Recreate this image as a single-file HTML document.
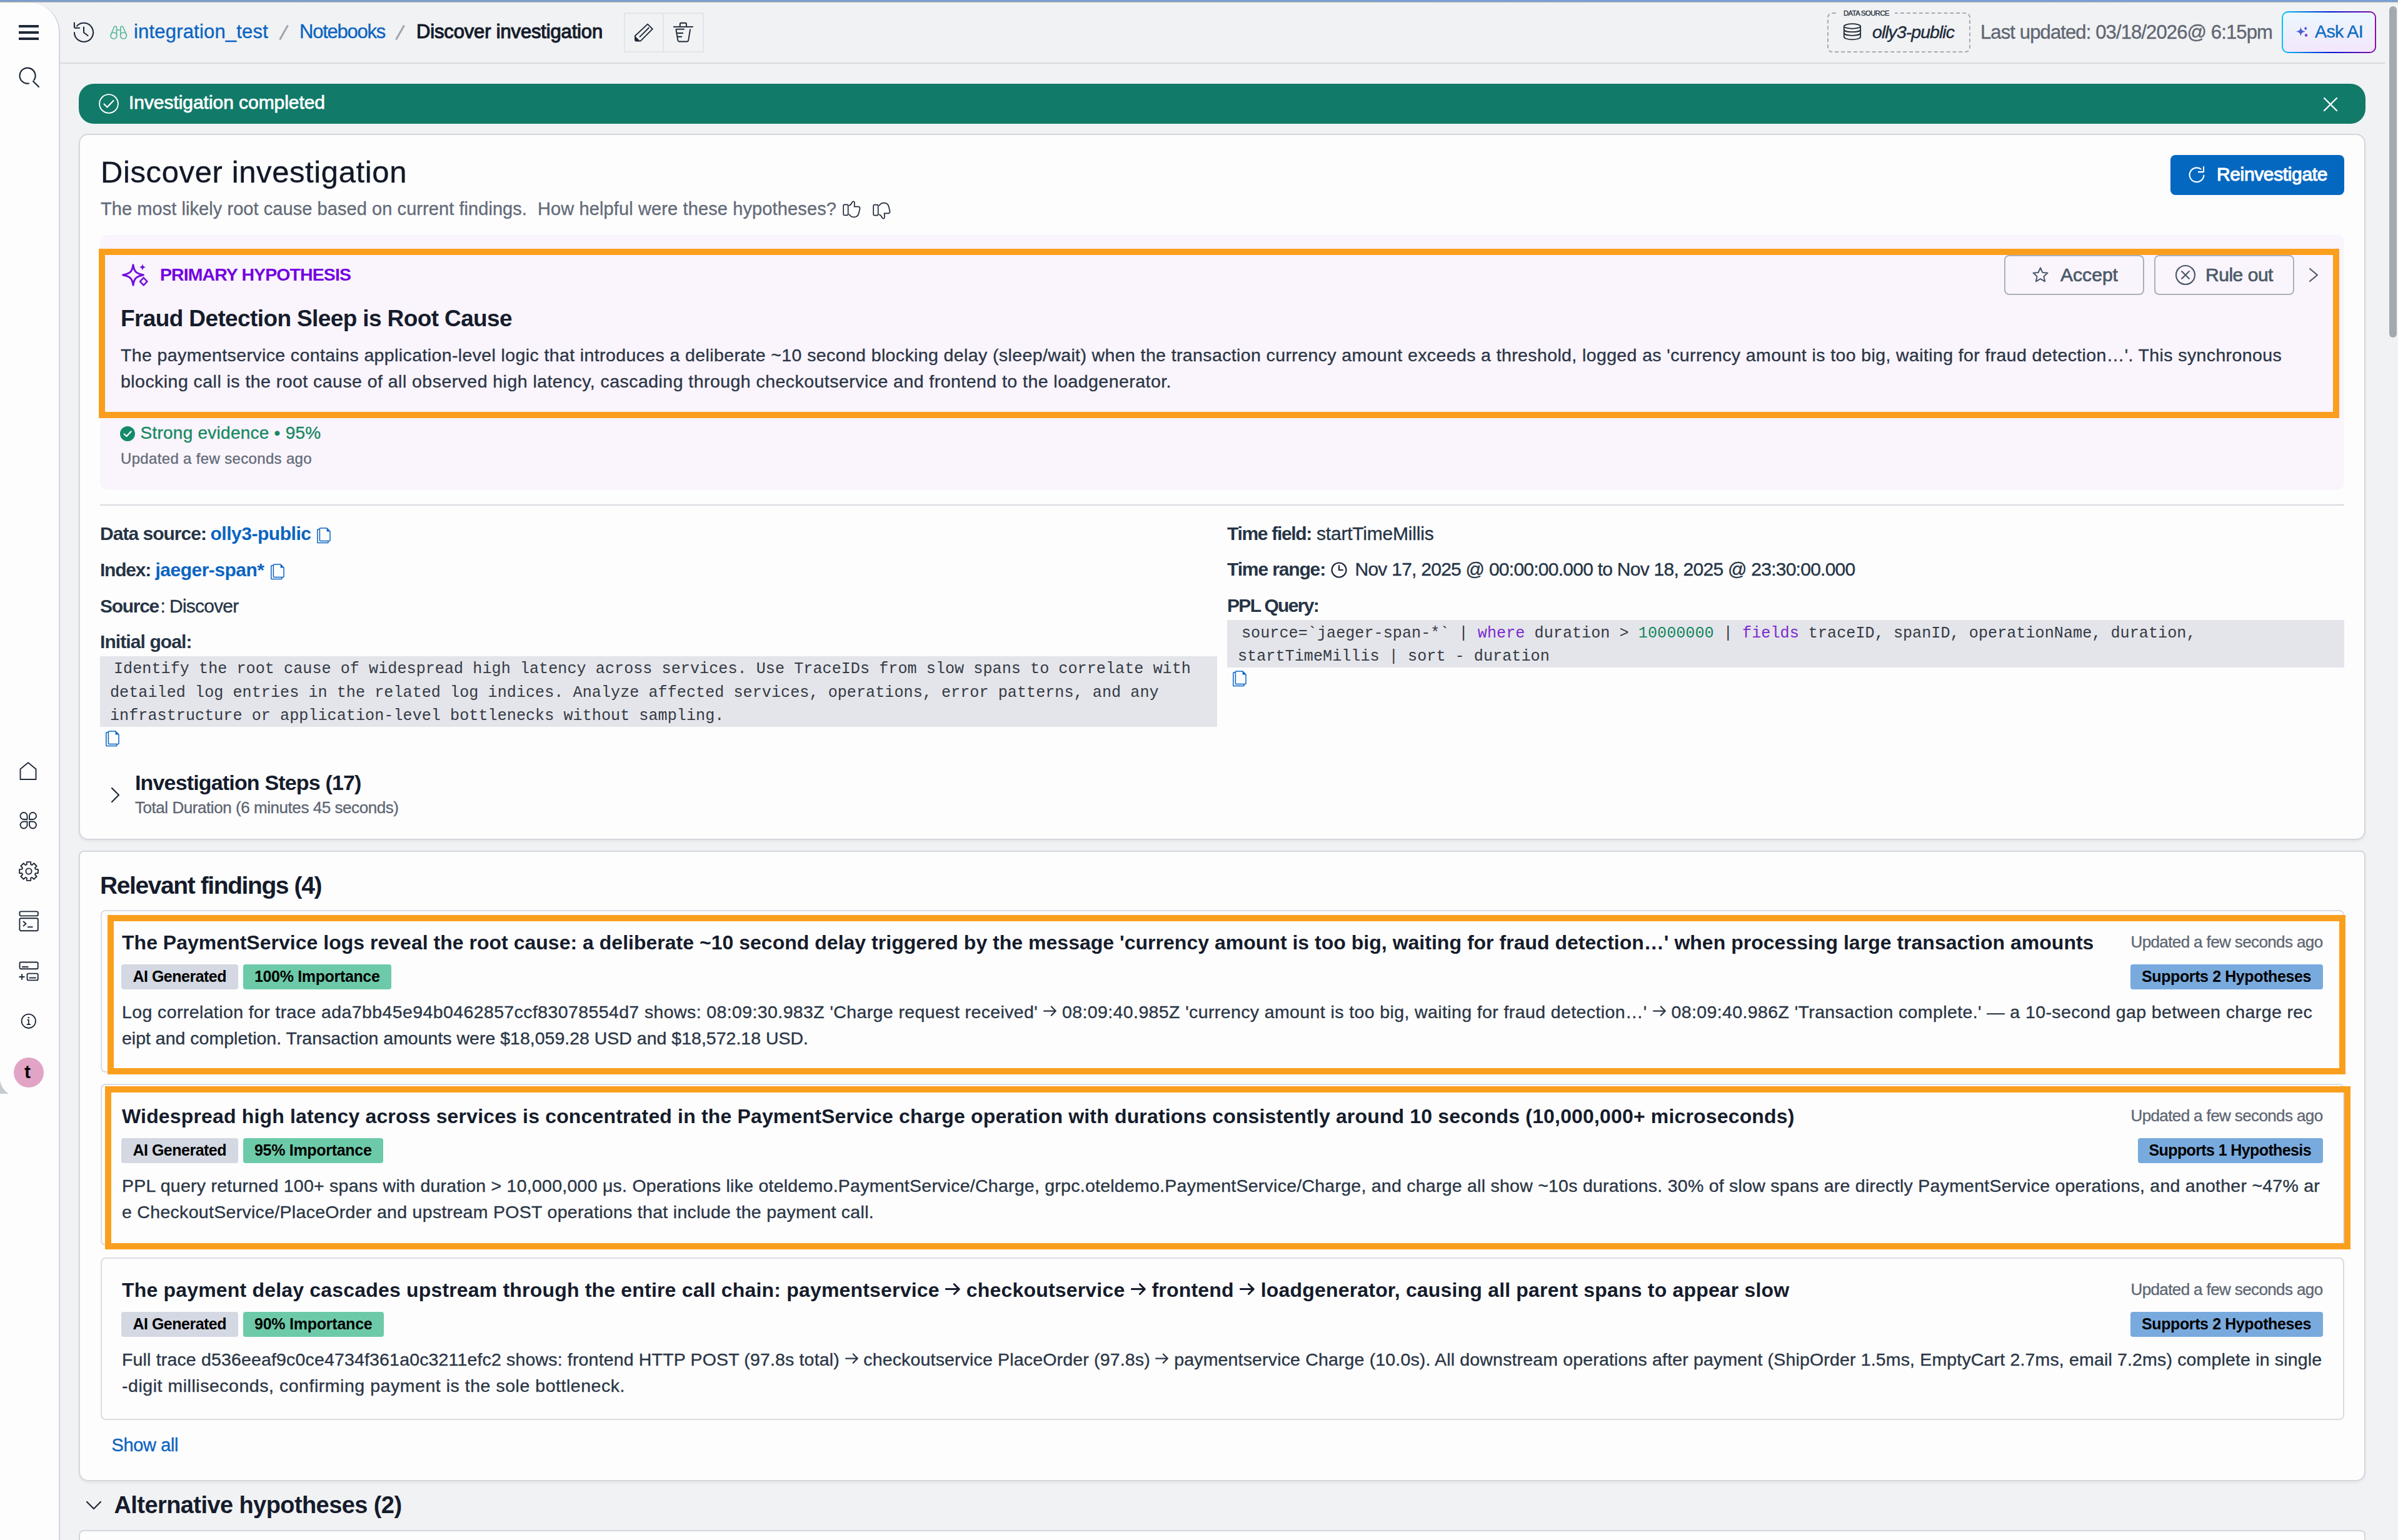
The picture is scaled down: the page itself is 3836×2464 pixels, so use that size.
<!DOCTYPE html><html><head><meta charset="utf-8"><style>html,body{margin:0;padding:0;}body{width:3836px;height:2464px;overflow:hidden;position:relative;background:#f1f2f4;font-family:"Liberation Sans",sans-serif;}.t{position:absolute;white-space:pre;line-height:1;}#root{position:relative;width:3836px;height:2464px;overflow:hidden;}</style></head><body><div id="root">
<div style="position:absolute;left:0px;top:0px;width:3836px;height:3px;box-sizing:border-box;background:linear-gradient(90deg,#7f9dcc,#7a9fd6);"></div>
<div style="position:absolute;left:0px;top:3px;width:3836px;height:1px;box-sizing:border-box;background:#b7c2a8;"></div>
<div style="position:absolute;left:0;top:4px;width:96px;height:2460px;box-sizing:border-box;background:#fdfdfe;border-right:2px solid #d3d6dc;border-top-right-radius:48px;"></div>
<svg style="position:absolute;left:0px;top:1725px;" width="16" height="26" viewBox="0 0 16 26" fill="none"><path d="M0 4 C1.5 12 6 20 14 25 H0 Z" fill="#c6cbd2"/></svg>
<div style="position:absolute;left:95px;top:100px;width:3720px;height:2px;box-sizing:border-box;background:#d6d9de;"></div>
<div style="position:absolute;left:3822px;top:10px;width:12px;height:530px;box-sizing:border-box;background:#a3a9b1;border-radius:6px;"></div>
<svg style="position:absolute;left:30px;top:40px;" width="32" height="24" viewBox="0 0 32 24" fill="none"><rect x="0" y="0" width="32" height="4" fill="#1f2937"/><rect x="0" y="10" width="32" height="4" fill="#1f2937"/><rect x="0" y="20" width="32" height="4" fill="#1f2937"/></svg>
<svg style="position:absolute;left:28px;top:106px;" width="36" height="36" viewBox="0 0 36 36" fill="none"><path d="M18 27.5 A12.5 12.5 0 1 1 26.5 22" stroke="#1f2937" stroke-width="2.2" stroke-linecap="round"/><path d="M25 24 L34 33" stroke="#1f2937" stroke-width="2.2" stroke-linecap="round"/></svg>
<svg style="position:absolute;left:30px;top:1218px;" width="32" height="32" viewBox="0 0 32 32" fill="none"><path d="M2.5 29 V12.5 L15 2.2 L27.5 12.5 V29 Z" stroke="#1f2937" stroke-width="1.9" stroke-linejoin="round"/></svg>
<svg style="position:absolute;left:30px;top:1298px;" width="32" height="32" viewBox="0 0 32 32" fill="none"><g stroke="#1f2937" stroke-width="1.9" stroke-linejoin="round"><path d="M13.5 13 H8 A5.5 5.5 0 1 1 13.5 7.5 Z"/><path d="M17 13 H22.5 A5.5 5.5 0 1 0 17 7.5 Z"/><path d="M13.5 16.5 H8 A5.5 5.5 0 1 0 13.5 22 Z"/><path d="M17 16.5 H22.5 A5.5 5.5 0 1 1 17 22 Z"/></g></svg>
<svg style="position:absolute;left:30px;top:1378px;" width="32" height="32" viewBox="0 0 32 32" fill="none"><g stroke="#1f2937" stroke-width="1.9" stroke-linejoin="round"><path d="M12.73 5.29 L12.84 1.13 L19.16 1.13 L19.27 5.29 L21.26 6.11 L24.28 3.25 L28.75 7.72 L25.89 10.74 L26.71 12.73 L30.87 12.84 L30.87 19.16 L26.71 19.27 L25.89 21.26 L28.75 24.28 L24.28 28.75 L21.26 25.89 L19.27 26.71 L19.16 30.87 L12.84 30.87 L12.73 26.71 L10.74 25.89 L7.72 28.75 L3.25 24.28 L6.11 21.26 L5.29 19.27 L1.13 19.16 L1.13 12.84 L5.29 12.73 L6.11 10.74 L3.25 7.72 L7.72 3.25 L10.74 6.11 Z"/><circle cx="16" cy="16" r="4.6"/></g></svg>
<svg style="position:absolute;left:30px;top:1456px;" width="34" height="36" viewBox="0 0 34 36" fill="none"><g stroke="#1f2937" stroke-width="1.9"><rect x="1.4" y="2.4" width="29.4" height="7" rx="2.2"/><rect x="1.4" y="13.2" width="29.4" height="20" rx="2.2"/><path d="M7.5 18.6 L11.6 22 L7.5 25.4" stroke-linecap="round" stroke-linejoin="round"/><path d="M14 27.2 H22.5"/></g></svg>
<svg style="position:absolute;left:30px;top:1536px;" width="34" height="36" viewBox="0 0 34 36" fill="none"><g stroke="#1f2937" stroke-width="1.9"><rect x="1.5" y="3.5" width="29.2" height="10.7" rx="2"/><path d="M5 11 H15.5"/><rect x="13.5" y="21.6" width="17.2" height="10.8" rx="2"/><path d="M16.5 28.5 H27.7"/><path d="M0.5 27 H9.5 M5 22.2 V31.8"/></g></svg>
<svg style="position:absolute;left:30px;top:1620px;" width="32" height="30" viewBox="0 0 32 30" fill="none"><g stroke="#1f2937" stroke-width="1.8"><circle cx="15.8" cy="13.8" r="11.2"/><path d="M13.6 11.8 H15.8 V19.2 M12.8 19.2 H19"/></g><circle cx="15.8" cy="8.3" r="1.3" fill="#1f2937"/></svg>
<div style="position:absolute;left:22px;top:1692px;width:48px;height:48px;box-sizing:border-box;background:#e2a4c5;border-radius:50%;"></div>
<svg style="position:absolute;left:116px;top:33px;" width="36" height="36" viewBox="0 0 36 36" fill="none"><g stroke="#1f2937" stroke-width="2.1" stroke-linecap="round" stroke-linejoin="round"><path d="M2.9 19 A15.1 15.1 0 1 0 6.9 8.6"/><path d="M2.9 3.6 V9.4 Q2.9 11.8 5.2 11.8 H11"/><path d="M18 10.5 V19 L24.5 24"/></g></svg>
<svg style="position:absolute;left:175px;top:39px;" width="30" height="26" viewBox="0 0 30 26" fill="none"><g stroke="#5cb89a" stroke-width="1.7"><circle cx="7" cy="18" r="5"/><circle cx="22.5" cy="18" r="5"/><path d="M2.2 17 L7.5 4.5 C8.5 2.5 11 2.5 11.5 4.5 V17.5 M27.3 17 L22 4.5 C21 2.5 18.5 2.5 18 4.5 V17.5 M11.5 9 H18"/></g></svg>
<svg style="position:absolute;left:440px;top:36px;" width="28" height="32" viewBox="0 0 28 32" fill="none"><path d="M7.5 27.5 L20.5 4.5" stroke="#a0a5ad" stroke-width="3" stroke-linecap="butt"/></svg>
<svg style="position:absolute;left:626px;top:36px;" width="28" height="32" viewBox="0 0 28 32" fill="none"><path d="M7.5 27.5 L20.5 4.5" stroke="#a0a5ad" stroke-width="3" stroke-linecap="butt"/></svg>
<div style="position:absolute;left:998px;top:20px;width:128px;height:64px;box-sizing:border-box;border:2px solid #e2e5e9;"></div>
<div style="position:absolute;left:1060px;top:20px;width:2px;height:64px;box-sizing:border-box;background:#e2e5e9;"></div>
<svg style="position:absolute;left:1010px;top:35px;" width="36" height="36" viewBox="0 0 36 36" fill="none"><g stroke="#1f2937" stroke-width="1.9" stroke-linejoin="round"><path d="M26 3.6 L33.8 11.4 L14.6 30.6 H8 Q6 30.6 6 28.6 V22.2 Z"/><path d="M13 24.4 L28.4 9"/></g><path d="M6 22.8 L14 30.6 H8 Q6 30.6 6 28.6 Z" fill="#1f2937"/></svg>
<svg style="position:absolute;left:1070px;top:30px;" width="44" height="44" viewBox="0 0 44 44" fill="none"><g stroke="#1f2937" stroke-width="1.9" stroke-linecap="butt" stroke-linejoin="round"><path d="M7 12.9 H38.8"/><path d="M17.8 12.9 V8.5 Q17.8 6.8 19.5 6.8 H26.3 Q28 6.8 28 8.5 V12.9"/><path d="M11.3 16.7 H24.9"/><path d="M11.3 16.4 L14.3 34.4 Q14.8 36.5 17 36.5 H28.6 Q30.8 36.5 31.2 34.4 L34.2 16.4"/><path d="M12.4 23 H22.9 M13.4 28.8 H21"/></g></svg>
<div style="position:absolute;left:2923px;top:20px;width:229px;height:64px;box-sizing:border-box;border:2px dashed #a6acb4;border-radius:8px;"></div>
<div style="position:absolute;left:2937px;top:12px;width:94px;height:16px;box-sizing:border-box;background:#f1f2f4;"></div>
<svg style="position:absolute;left:2946px;top:36px;" width="34" height="30" viewBox="0 0 34 30" fill="none"><g stroke="#1f2937" stroke-width="1.8"><ellipse cx="17" cy="6" rx="13.2" ry="3.8"/><path d="M3.8 6 V23 C3.8 25.3 9.5 27.3 17 27.3 C24.5 27.3 30.2 25.3 30.2 23 V6"/><path d="M3.8 11.2 C3.8 13.5 9.5 15.2 17 15.2 C24.5 15.2 30.2 13.5 30.2 11.2 M3.8 16.8 C3.8 19.1 9.5 20.8 17 20.8 C24.5 20.8 30.2 19.1 30.2 16.8"/></g></svg>
<div style="position:absolute;left:3650px;top:18px;width:151px;height:67px;box-sizing:border-box;border-radius:10px;padding:2px;background:linear-gradient(90deg,#00c6f7,#0018d0 52%,#8a0ea6);"><div style="width:100%;height:100%;border-radius:8px;background:linear-gradient(180deg,#ebf7fd,#f3e6fb);"></div></div>
<svg style="position:absolute;left:3670px;top:40px;" width="24" height="22" viewBox="0 0 24 22" fill="none"><defs><linearGradient id="ag" x1="0" y1="0" x2="1" y2="1"><stop offset="0" stop-color="#3f7ee6"/><stop offset="1" stop-color="#5a3fd0"/></linearGradient></defs><path d="M10.4 2.5 C11 7.5 12.5 9.5 18 10.4 C12.5 11.3 11 13.3 10.4 18.3 C9.8 13.3 8.3 11.3 2.8 10.4 C8.3 9.5 9.8 7.5 10.4 2.5 Z" fill="url(#ag)"/><path d="M18.2 2.8 L20.6 5.5 L18.2 8.2 L15.8 5.5 Z" fill="#4b5ad8"/><path d="M19 13.6 L21.6 16.4 L19 19.2 L16.4 16.4 Z" fill="#6a3fc8"/></svg>
<div style="position:absolute;left:126px;top:134px;width:3658px;height:64px;box-sizing:border-box;background:#117a69;border-radius:24px;"></div>
<svg style="position:absolute;left:156px;top:148px;" width="36" height="36" viewBox="0 0 36 36" fill="none"><circle cx="18" cy="18" r="14.9" stroke="#fff" stroke-width="1.9"/><path d="M10.5 18.5 L15.5 23.5 L25.5 13" stroke="#fff" stroke-width="2.2" stroke-linecap="round" stroke-linejoin="round"/></svg>
<svg style="position:absolute;left:3716px;top:155px;" width="24" height="24" viewBox="0 0 24 24" fill="none"><path d="M2 2 L22 22 M22 2 L2 22" stroke="#fff" stroke-width="2.4" stroke-linecap="round"/></svg>
<div style="position:absolute;left:126px;top:214px;width:3658px;height:1130px;box-sizing:border-box;background:#fdfdfe;border:2px solid #d3d7dc;border-radius:15px;box-shadow:0 3px 4px rgba(0,0,0,0.05);"></div>
<svg style="position:absolute;left:1346px;top:320px;" width="32" height="30" viewBox="0 0 32 30" fill="none"><g stroke="#1f2937" stroke-width="1.7" stroke-linejoin="round" stroke-linecap="round"><rect x="3.2" y="7.3" width="7.5" height="17.1" rx="1.6"/><path d="M12.4 8.6 C14.2 8.4 14.8 7.8 15.8 6 L17.6 3 C18.8 1.8 21.2 2.4 21 5 L20.6 10.6 H27.2 C29.2 10.8 29.9 12.6 29.4 14.4 L27.6 21.8 C27.2 23.6 26 25.6 23.4 26.8 C21 27.6 18 27.4 16 26.4 C14.5 25.6 13.5 24.4 12.4 23.2"/></g></svg>
<svg style="position:absolute;left:1394px;top:321.7px;transform:scaleY(-1);" width="32" height="30" viewBox="0 0 32 30" fill="none"><g stroke="#1f2937" stroke-width="1.7" stroke-linejoin="round" stroke-linecap="round"><rect x="3.2" y="7.3" width="7.5" height="17.1" rx="1.6"/><path d="M12.4 8.6 C14.2 8.4 14.8 7.8 15.8 6 L17.6 3 C18.8 1.8 21.2 2.4 21 5 L20.6 10.6 H27.2 C29.2 10.8 29.9 12.6 29.4 14.4 L27.6 21.8 C27.2 23.6 26 25.6 23.4 26.8 C21 27.6 18 27.4 16 26.4 C14.5 25.6 13.5 24.4 12.4 23.2"/></g></svg>
<div style="position:absolute;left:3472px;top:248px;width:278px;height:64px;box-sizing:border-box;background:#0468c0;border-radius:8px;"></div>
<svg style="position:absolute;left:3498px;top:262px;" width="32" height="34" viewBox="0 0 32 34" fill="none"><g stroke="#fff" stroke-width="2.1" stroke-linecap="butt" stroke-linejoin="round"><path d="M27.4 17.7 A11.4 11.4 0 1 1 23.3 9"/><path d="M27 4.2 V13.1 H18"/></g></svg>
<div style="position:absolute;left:160px;top:376px;width:3590px;height:408px;box-sizing:border-box;background:#faf4fd;border-radius:12px;"></div>
<div style="position:absolute;left:158px;top:398px;width:3584px;height:271px;box-sizing:border-box;border:10px solid #fa9f1d;"></div>
<svg style="position:absolute;left:194px;top:420px;" width="44" height="40" viewBox="0 0 44 40" fill="none"><path d="M19 3.8 C20.5 14 23 17.5 35.4 20 C23 22.5 20.5 26 19 36.2 C17.5 26 15 22.5 2.6 20 C15 17.5 17.5 14 19 3.8 Z" stroke="#7211e0" stroke-width="3" stroke-linejoin="round"/><path d="M34 1.8 C34.6 5.6 35.6 6.8 39.4 7.5 C35.6 8.2 34.6 9.4 34 13.2 C33.4 9.4 32.4 8.2 28.6 7.5 C32.4 6.8 33.4 5.6 34 1.8 Z" fill="#7211e0"/><path d="M35.7 24.4 L41.4 30.4 L35.7 36.4 L30 30.4 Z" stroke="#7211e0" stroke-width="2.6" stroke-linejoin="round"/></svg>
<div style="position:absolute;left:3206px;top:408px;width:224px;height:64px;box-sizing:border-box;border:2px solid #a9b1ba;border-radius:8px;"></div>
<svg style="position:absolute;left:3250px;top:426px;" width="28" height="28" viewBox="0 0 28 28" fill="none"><path d="M14 2.5 L17.4 10 L25.5 10.8 L19.4 16.2 L21.2 24.3 L14 20.1 L6.8 24.3 L8.6 16.2 L2.5 10.8 L10.6 10 Z" stroke="#4a5a68" stroke-width="2" stroke-linejoin="round"/></svg>
<div style="position:absolute;left:3446px;top:408px;width:224px;height:64px;box-sizing:border-box;border:2px solid #a9b1ba;border-radius:8px;"></div>
<svg style="position:absolute;left:3478px;top:422px;" width="36" height="36" viewBox="0 0 36 36" fill="none"><circle cx="18" cy="18" r="15" stroke="#4a5a68" stroke-width="2.2"/><path d="M11.5 11.5 L24.5 24.5 M24.5 11.5 L11.5 24.5" stroke="#4a5a68" stroke-width="2.2"/></svg>
<svg style="position:absolute;left:3692px;top:428px;" width="20" height="24" viewBox="0 0 20 24" fill="none"><path d="M3 2 L15 12 L3 22" stroke="#4a5a68" stroke-width="2.2" stroke-linecap="round" stroke-linejoin="round"/></svg>
<svg style="position:absolute;left:192px;top:682px;" width="24" height="24" viewBox="0 0 24 24" fill="none"><circle cx="12" cy="12" r="12" fill="#148a68"/><path d="M6.5 12.5 L10.5 16 L17.5 8.5" stroke="#fff" stroke-width="2.2" stroke-linecap="round" stroke-linejoin="round"/></svg>
<div style="position:absolute;left:160px;top:807px;width:3590px;height:2px;box-sizing:border-box;background:#d6d9de;"></div>
<svg style="position:absolute;left:505px;top:843px;" width="26" height="28" viewBox="0 0 26 28" fill="none"><g stroke="#0b64c1" stroke-width="1.5" stroke-linejoin="round"><path d="M7.2 2.1 H17.8 L23 7.3 V21.6 Q23 22.4 22.2 22.4 H7.2 Q6.4 22.4 6.4 21.6 V2.9 Q6.4 2.1 7.2 2.1 Z"/><path d="M6.4 3.6 L3.4 4.1 Q2.8 4.2 2.8 4.8 V24.8 Q2.8 25.6 3.6 25.6 H19.2 Q20 25.6 20 24.8 V22.4"/></g><path d="M17.6 2.1 L23 7.5 H17.6 Z" fill="#0b64c1"/></svg>
<svg style="position:absolute;left:431px;top:901px;" width="26" height="28" viewBox="0 0 26 28" fill="none"><g stroke="#0b64c1" stroke-width="1.5" stroke-linejoin="round"><path d="M7.2 2.1 H17.8 L23 7.3 V21.6 Q23 22.4 22.2 22.4 H7.2 Q6.4 22.4 6.4 21.6 V2.9 Q6.4 2.1 7.2 2.1 Z"/><path d="M6.4 3.6 L3.4 4.1 Q2.8 4.2 2.8 4.8 V24.8 Q2.8 25.6 3.6 25.6 H19.2 Q20 25.6 20 24.8 V22.4"/></g><path d="M17.6 2.1 L23 7.5 H17.6 Z" fill="#0b64c1"/></svg>
<div style="position:absolute;left:160px;top:1050px;width:1787px;height:113px;box-sizing:border-box;background:#e4e5ea;"></div>
<svg style="position:absolute;left:167px;top:1168px;" width="26" height="28" viewBox="0 0 26 28" fill="none"><g stroke="#0b64c1" stroke-width="1.5" stroke-linejoin="round"><path d="M7.2 2.1 H17.8 L23 7.3 V21.6 Q23 22.4 22.2 22.4 H7.2 Q6.4 22.4 6.4 21.6 V2.9 Q6.4 2.1 7.2 2.1 Z"/><path d="M6.4 3.6 L3.4 4.1 Q2.8 4.2 2.8 4.8 V24.8 Q2.8 25.6 3.6 25.6 H19.2 Q20 25.6 20 24.8 V22.4"/></g><path d="M17.6 2.1 L23 7.5 H17.6 Z" fill="#0b64c1"/></svg>
<svg style="position:absolute;left:2128px;top:898px;" width="28" height="28" viewBox="0 0 28 28" fill="none"><g stroke="#1f2937" stroke-width="2.2" stroke-linecap="round"><circle cx="14" cy="14" r="11.5"/><path d="M14 7 V14 H20"/></g></svg>
<div style="position:absolute;left:1963px;top:992px;width:1787px;height:76px;box-sizing:border-box;background:#e4e5ea;"></div>
<svg style="position:absolute;left:1970px;top:1072px;" width="26" height="28" viewBox="0 0 26 28" fill="none"><g stroke="#0b64c1" stroke-width="1.5" stroke-linejoin="round"><path d="M7.2 2.1 H17.8 L23 7.3 V21.6 Q23 22.4 22.2 22.4 H7.2 Q6.4 22.4 6.4 21.6 V2.9 Q6.4 2.1 7.2 2.1 Z"/><path d="M6.4 3.6 L3.4 4.1 Q2.8 4.2 2.8 4.8 V24.8 Q2.8 25.6 3.6 25.6 H19.2 Q20 25.6 20 24.8 V22.4"/></g><path d="M17.6 2.1 L23 7.5 H17.6 Z" fill="#0b64c1"/></svg>
<svg style="position:absolute;left:175px;top:1258px;" width="20" height="28" viewBox="0 0 20 28" fill="none"><path d="M4 3 L15 14 L4 25" stroke="#1f2937" stroke-width="2.2" stroke-linecap="round" stroke-linejoin="round"/></svg>
<div style="position:absolute;left:126px;top:1361px;width:3658px;height:1009px;box-sizing:border-box;background:#fdfdfe;border:2px solid #d3d7dc;border-radius:8px 8px 15px 15px;box-shadow:0 3px 4px rgba(0,0,0,0.05);"></div>
<div style="position:absolute;left:161px;top:1456px;width:3589px;height:260px;box-sizing:border-box;border:2px solid #d9dce1;border-radius:8px;"></div>
<div style="position:absolute;left:172px;top:1464px;width:3580px;height:255px;box-sizing:border-box;border:10px solid #fa9f1d;"></div>
<div style="position:absolute;left:194px;top:1543px;width:187px;height:40px;box-sizing:border-box;background:#d3d8e2;border-radius:4px;"></div>
<div style="position:absolute;left:389px;top:1543px;width:237px;height:40px;box-sizing:border-box;background:#6dcaa9;border-radius:4px;"></div>
<div style="position:absolute;left:3408px;top:1543px;width:308px;height:40px;box-sizing:border-box;background:#79aade;border-radius:4px;"></div>
<div style="position:absolute;left:161px;top:1734px;width:3589px;height:259px;box-sizing:border-box;border:2px solid #d9dce1;border-radius:8px;"></div>
<div style="position:absolute;left:168px;top:1738px;width:3592px;height:261px;box-sizing:border-box;border:10px solid #fa9f1d;"></div>
<div style="position:absolute;left:194px;top:1821px;width:187px;height:40px;box-sizing:border-box;background:#d3d8e2;border-radius:4px;"></div>
<div style="position:absolute;left:389px;top:1821px;width:224px;height:40px;box-sizing:border-box;background:#6dcaa9;border-radius:4px;"></div>
<div style="position:absolute;left:3420px;top:1821px;width:296px;height:40px;box-sizing:border-box;background:#79aade;border-radius:4px;"></div>
<div style="position:absolute;left:161px;top:2012px;width:3589px;height:260px;box-sizing:border-box;border:2px solid #d9dce1;border-radius:8px;"></div>
<div style="position:absolute;left:194px;top:2099px;width:187px;height:40px;box-sizing:border-box;background:#d3d8e2;border-radius:4px;"></div>
<div style="position:absolute;left:389px;top:2099px;width:225px;height:40px;box-sizing:border-box;background:#6dcaa9;border-radius:4px;"></div>
<div style="position:absolute;left:3408px;top:2099px;width:308px;height:40px;box-sizing:border-box;background:#79aade;border-radius:4px;"></div>
<svg style="position:absolute;left:136px;top:2398px;" width="28" height="22" viewBox="0 0 28 22" fill="none"><path d="M3 5 L14 16 L25 5" stroke="#1f2937" stroke-width="2.2" stroke-linecap="round" stroke-linejoin="round"/></svg>
<div style="position:absolute;left:126px;top:2448px;width:3658px;height:32px;box-sizing:border-box;background:#fdfdfe;border:2px solid #d3d7dc;border-radius:8px;"></div>
<div class="t" style="left:39px;top:1699.50px;font-family:'Liberation Sans', sans-serif;font-size:30px;font-weight:700;color:#000000;">t</div>
<div class="t" style="left:214px;top:34.85px;font-family:'Liberation Sans', sans-serif;font-size:31px;font-weight:400;color:#0b64c1;letter-spacing:0.188px;-webkit-text-stroke:0.35px currentColor;">integration_test</div>
<div class="t" style="left:479px;top:34.85px;font-family:'Liberation Sans', sans-serif;font-size:31px;font-weight:400;color:#0b64c1;letter-spacing:-1.247px;-webkit-text-stroke:0.35px currentColor;">Notebooks</div>
<div class="t" style="left:666px;top:34.85px;font-family:'Liberation Sans', sans-serif;font-size:31px;font-weight:400;color:#151c2b;letter-spacing:-0.161px;-webkit-text-stroke:1.1px #151c2b;">Discover investigation</div>
<div class="t" style="left:2949px;top:15.59px;font-family:'Liberation Sans', sans-serif;font-size:11.3px;font-weight:400;color:#2b3440;letter-spacing:-0.574px;-webkit-text-stroke:0.35px currentColor;">DATA SOURCE</div>
<div class="t" style="left:2995px;top:36.78px;font-family:'Liberation Sans', sans-serif;font-size:28.5px;font-weight:400;color:#1d2a3a;letter-spacing:-0.965px;-webkit-text-stroke:0.35px currentColor;font-style:italic;">olly3-public</div>
<div class="t" style="left:3168px;top:35.65px;font-family:'Liberation Sans', sans-serif;font-size:31px;font-weight:400;color:#5f6672;letter-spacing:-0.879px;-webkit-text-stroke:0.35px currentColor;">Last updated: 03/18/2026@ 6:15pm</div>
<div class="t" style="left:3703px;top:36.48px;font-family:'Liberation Sans', sans-serif;font-size:28.5px;font-weight:400;color:#0a6bbf;letter-spacing:-0.633px;-webkit-text-stroke:0.35px currentColor;">Ask AI</div>
<div class="t" style="left:206px;top:148.70px;font-family:'Liberation Sans', sans-serif;font-size:30px;font-weight:400;color:#ffffff;letter-spacing:-0.052px;-webkit-text-stroke:0.75px #ffffff;">Investigation completed</div>
<div class="t" style="left:161px;top:250.85px;font-family:'Liberation Sans', sans-serif;font-size:49px;font-weight:400;color:#111827;letter-spacing:0.609px;-webkit-text-stroke:0.35px currentColor;">Discover investigation</div>
<div class="t" style="left:161px;top:319.85px;font-family:'Liberation Sans', sans-serif;font-size:29px;font-weight:400;color:#646b78;letter-spacing:0.063px;-webkit-text-stroke:0.35px currentColor;">The most likely root cause based on current findings.</div>
<div class="t" style="left:860px;top:319.85px;font-family:'Liberation Sans', sans-serif;font-size:29px;font-weight:400;color:#646b78;letter-spacing:0.119px;-webkit-text-stroke:0.35px currentColor;">How helpful were these hypotheses?</div>
<div class="t" style="left:3546px;top:263.50px;font-family:'Liberation Sans', sans-serif;font-size:30px;font-weight:400;color:#ffffff;letter-spacing:-0.368px;-webkit-text-stroke:1.1px #ffffff;">Reinvestigate</div>
<div class="t" style="left:256px;top:424.77px;font-family:'Liberation Sans', sans-serif;font-size:28.5px;font-weight:700;color:#7300e0;letter-spacing:-0.916px;">PRIMARY HYPOTHESIS</div>
<div class="t" style="left:3296px;top:424.50px;font-family:'Liberation Sans', sans-serif;font-size:30px;font-weight:400;color:#4b5a68;letter-spacing:0.047px;-webkit-text-stroke:0.7px #4b5a68;">Accept</div>
<div class="t" style="left:3528px;top:424.50px;font-family:'Liberation Sans', sans-serif;font-size:30px;font-weight:400;color:#4b5a68;letter-spacing:-0.469px;-webkit-text-stroke:0.7px #4b5a68;">Rule out</div>
<div class="t" style="left:193px;top:491.05px;font-family:'Liberation Sans', sans-serif;font-size:37px;font-weight:700;color:#151c2b;letter-spacing:-0.618px;">Fraud Detection Sleep is Root Cause</div>
<div class="t" style="left:193px;top:553.77px;font-family:'Liberation Sans', sans-serif;font-size:28.5px;font-weight:400;color:#2b3645;letter-spacing:0.385px;-webkit-text-stroke:0.35px currentColor;">The paymentservice contains application-level logic that introduces a deliberate ~10 second blocking delay (sleep/wait) when the transaction currency amount exceeds a threshold, logged as 'currency amount is too big, waiting for fraud detection…'. This synchronous</div>
<div class="t" style="left:193px;top:595.77px;font-family:'Liberation Sans', sans-serif;font-size:28.5px;font-weight:400;color:#2b3645;letter-spacing:0.455px;-webkit-text-stroke:0.35px currentColor;">blocking call is the root cause of all observed high latency, cascading through checkoutservice and frontend to the loadgenerator.</div>
<div class="t" style="left:224.5px;top:679.40px;font-family:'Liberation Sans', sans-serif;font-size:28px;font-weight:400;color:#17895f;letter-spacing:0.249px;-webkit-text-stroke:0.35px currentColor;">Strong evidence • 95%</div>
<div class="t" style="left:193px;top:721.60px;font-family:'Liberation Sans', sans-serif;font-size:24px;font-weight:400;color:#636b77;letter-spacing:0.338px;-webkit-text-stroke:0.35px currentColor;">Updated a few seconds ago</div>
<div class="t" style="left:160px;top:838.50px;font-family:'Liberation Sans', sans-serif;font-size:30px;font-weight:700;color:#263445;letter-spacing:-0.978px;">Data source:</div>
<div class="t" style="left:336.5px;top:838.50px;font-family:'Liberation Sans', sans-serif;font-size:30px;font-weight:700;color:#0b64c1;letter-spacing:-0.474px;">olly3-public</div>
<div class="t" style="left:160px;top:896.50px;font-family:'Liberation Sans', sans-serif;font-size:30px;font-weight:700;color:#263445;letter-spacing:-1.227px;">Index:</div>
<div class="t" style="left:248.5px;top:896.50px;font-family:'Liberation Sans', sans-serif;font-size:30px;font-weight:700;color:#0b64c1;letter-spacing:-0.507px;">jaeger-span*</div>
<div class="t" style="left:160px;top:954.50px;font-family:'Liberation Sans', sans-serif;font-size:30px;font-weight:700;color:#263445;letter-spacing:-1.286px;">Source</div>
<div class="t" style="left:256.5px;top:954.50px;font-family:'Liberation Sans', sans-serif;font-size:30px;font-weight:400;color:#263445;letter-spacing:-3.844px;-webkit-text-stroke:0.35px currentColor;">:</div>
<div class="t" style="left:271px;top:954.50px;font-family:'Liberation Sans', sans-serif;font-size:30px;font-weight:400;color:#263445;letter-spacing:-0.775px;-webkit-text-stroke:0.35px currentColor;">Discover</div>
<div class="t" style="left:160px;top:1012.00px;font-family:'Liberation Sans', sans-serif;font-size:30px;font-weight:700;color:#263445;letter-spacing:-0.911px;">Initial goal:</div>
<div class="t" style="left:182px;top:1057.92px;font-family:'Liberation Mono', monospace;font-size:25.1px;font-weight:400;color:#343a45;letter-spacing:0.055px;">Identify the root cause of widespread high latency across services. Use TraceIDs from slow spans to correlate with</div>
<div class="t" style="left:176px;top:1095.92px;font-family:'Liberation Mono', monospace;font-size:25.1px;font-weight:400;color:#343a45;letter-spacing:0.055px;">detailed log entries in the related log indices. Analyze affected services, operations, error patterns, and any</div>
<div class="t" style="left:176px;top:1133.42px;font-family:'Liberation Mono', monospace;font-size:25.1px;font-weight:400;color:#343a45;letter-spacing:0.055px;">infrastructure or application-level bottlenecks without sampling.</div>
<div class="t" style="left:1963px;top:838.50px;font-family:'Liberation Sans', sans-serif;font-size:30px;font-weight:700;color:#263445;letter-spacing:-1.317px;">Time field:</div>
<div class="t" style="left:2106px;top:838.50px;font-family:'Liberation Sans', sans-serif;font-size:30px;font-weight:400;color:#263445;letter-spacing:-0.203px;-webkit-text-stroke:0.35px currentColor;">startTimeMillis</div>
<div class="t" style="left:1963px;top:896.00px;font-family:'Liberation Sans', sans-serif;font-size:30px;font-weight:700;color:#263445;letter-spacing:-1.136px;">Time range:</div>
<div class="t" style="left:2167.5px;top:896.00px;font-family:'Liberation Sans', sans-serif;font-size:30px;font-weight:400;color:#263445;letter-spacing:-0.745px;-webkit-text-stroke:0.35px currentColor;">Nov 17, 2025 @ 00:00:00.000 to Nov 18, 2025 @ 23:30:00.000</div>
<div class="t" style="left:1963px;top:953.50px;font-family:'Liberation Sans', sans-serif;font-size:30px;font-weight:700;color:#263445;letter-spacing:-1.684px;">PPL Query:</div>
<div class="t" style="left:1986px;top:1000.92px;font-family:'Liberation Mono', monospace;font-size:25.1px;font-weight:400;color:#343a45;letter-spacing:0.055px;">source=`jaeger-span-*` | <span style="color:#7b2bd0">where</span> duration &gt; <span style="color:#14875f">10000000</span> | <span style="color:#7b2bd0">fields</span> traceID, spanID, operationName, duration,</div>
<div class="t" style="left:1980px;top:1038.42px;font-family:'Liberation Mono', monospace;font-size:25.1px;font-weight:400;color:#343a45;letter-spacing:0.055px;">startTimeMillis | sort - duration</div>
<div class="t" style="left:216px;top:1235.10px;font-family:'Liberation Sans', sans-serif;font-size:34px;font-weight:700;color:#151c2b;letter-spacing:-0.839px;">Investigation Steps (17)</div>
<div class="t" style="left:216px;top:1279.40px;font-family:'Liberation Sans', sans-serif;font-size:26px;font-weight:400;color:#5f6773;letter-spacing:-0.443px;-webkit-text-stroke:0.35px currentColor;">Total Duration (6 minutes 45 seconds)</div>
<div class="t" style="left:160px;top:1396.85px;font-family:'Liberation Sans', sans-serif;font-size:39px;font-weight:700;color:#151c2b;letter-spacing:-1.407px;">Relevant findings (4)</div>
<div class="t" style="left:195px;top:1491.80px;font-family:'Liberation Sans', sans-serif;font-size:32px;font-weight:700;color:#151c2b;letter-spacing:0.016px;">The PaymentService logs reveal the root cause: a deliberate ~10 second delay triggered by the message 'currency amount is too big, waiting for fraud detection…' when processing large transaction amounts</div>
<div class="t" style="left:3408.5px;top:1493.90px;font-family:'Liberation Sans', sans-serif;font-size:26px;font-weight:400;color:#5f6773;letter-spacing:-0.614px;-webkit-text-stroke:0.35px currentColor;">Updated a few seconds ago</div>
<div class="t" style="left:212.5px;top:1549.75px;font-family:'Liberation Sans', sans-serif;font-size:25px;font-weight:700;color:#000000;letter-spacing:-0.509px;">AI Generated</div>
<div class="t" style="left:407px;top:1549.75px;font-family:'Liberation Sans', sans-serif;font-size:25px;font-weight:700;color:#000000;letter-spacing:-0.343px;">100% Importance</div>
<div class="t" style="left:3426px;top:1549.75px;font-family:'Liberation Sans', sans-serif;font-size:25px;font-weight:700;color:#000000;letter-spacing:-0.392px;">Supports 2 Hypotheses</div>
<div class="t" style="left:195px;top:1604.78px;font-family:'Liberation Sans', sans-serif;font-size:28.5px;font-weight:400;color:#2b3645;letter-spacing:0.390px;-webkit-text-stroke:0.35px currentColor;">Log correlation for trace ada7bb45e94b0462857ccf83078554d7 shows: 08:09:30.983Z 'Charge request received' <svg style="display:inline-block;width:0.74em;height:0.6em;vertical-align:0.09em;margin:0 0.02em" viewBox="0 0 24 19.5" fill="none"><path d="M1.2 9.75 H22.6 M14.6 1.7 L22.6 9.75 L14.6 17.8" stroke="#2b3645" stroke-width="2.5" stroke-linecap="round" stroke-linejoin="round"/></svg> 08:09:40.985Z 'currency amount is too big, waiting for fraud detection…' <svg style="display:inline-block;width:0.74em;height:0.6em;vertical-align:0.09em;margin:0 0.02em" viewBox="0 0 24 19.5" fill="none"><path d="M1.2 9.75 H22.6 M14.6 1.7 L22.6 9.75 L14.6 17.8" stroke="#2b3645" stroke-width="2.5" stroke-linecap="round" stroke-linejoin="round"/></svg> 08:09:40.986Z 'Transaction complete.' — a 10-second gap between charge rec</div>
<div class="t" style="left:195px;top:1647.28px;font-family:'Liberation Sans', sans-serif;font-size:28.5px;font-weight:400;color:#2b3645;letter-spacing:0.001px;-webkit-text-stroke:0.35px currentColor;">eipt and completion. Transaction amounts were $18,059.28 USD and $18,572.18 USD.</div>
<div class="t" style="left:195px;top:1769.80px;font-family:'Liberation Sans', sans-serif;font-size:32px;font-weight:700;color:#151c2b;letter-spacing:0.161px;">Widespread high latency across services is concentrated in the PaymentService charge operation with durations consistently around 10 seconds (10,000,000+ microseconds)</div>
<div class="t" style="left:3408.5px;top:1771.90px;font-family:'Liberation Sans', sans-serif;font-size:26px;font-weight:400;color:#5f6773;letter-spacing:-0.614px;-webkit-text-stroke:0.35px currentColor;">Updated a few seconds ago</div>
<div class="t" style="left:212.5px;top:1827.75px;font-family:'Liberation Sans', sans-serif;font-size:25px;font-weight:700;color:#000000;letter-spacing:-0.509px;">AI Generated</div>
<div class="t" style="left:407px;top:1827.75px;font-family:'Liberation Sans', sans-serif;font-size:25px;font-weight:700;color:#000000;letter-spacing:-0.304px;">95% Importance</div>
<div class="t" style="left:3437.5px;top:1827.75px;font-family:'Liberation Sans', sans-serif;font-size:25px;font-weight:700;color:#000000;letter-spacing:-0.608px;">Supports 1 Hypothesis</div>
<div class="t" style="left:195px;top:1882.78px;font-family:'Liberation Sans', sans-serif;font-size:28.5px;font-weight:400;color:#2b3645;letter-spacing:0.249px;-webkit-text-stroke:0.35px currentColor;">PPL query returned 100+ spans with duration &gt; 10,000,000 μs. Operations like oteldemo.PaymentService/Charge, grpc.oteldemo.PaymentService/Charge, and charge all show ~10s durations. 30% of slow spans are directly PaymentService operations, and another ~47% ar</div>
<div class="t" style="left:195px;top:1925.28px;font-family:'Liberation Sans', sans-serif;font-size:28.5px;font-weight:400;color:#2b3645;letter-spacing:0.301px;-webkit-text-stroke:0.35px currentColor;">e CheckoutService/PlaceOrder and upstream POST operations that include the payment call.</div>
<div class="t" style="left:195px;top:2047.80px;font-family:'Liberation Sans', sans-serif;font-size:32px;font-weight:700;color:#151c2b;letter-spacing:0.183px;">The payment delay cascades upstream through the entire call chain: paymentservice <svg style="display:inline-block;width:0.74em;height:0.6em;vertical-align:0.09em;margin:0 0.02em" viewBox="0 0 24 19.5" fill="none"><path d="M1.2 9.75 H22.6 M14.6 1.7 L22.6 9.75 L14.6 17.8" stroke="#151c2b" stroke-width="3.0" stroke-linecap="round" stroke-linejoin="round"/></svg> checkoutservice <svg style="display:inline-block;width:0.74em;height:0.6em;vertical-align:0.09em;margin:0 0.02em" viewBox="0 0 24 19.5" fill="none"><path d="M1.2 9.75 H22.6 M14.6 1.7 L22.6 9.75 L14.6 17.8" stroke="#151c2b" stroke-width="3.0" stroke-linecap="round" stroke-linejoin="round"/></svg> frontend <svg style="display:inline-block;width:0.74em;height:0.6em;vertical-align:0.09em;margin:0 0.02em" viewBox="0 0 24 19.5" fill="none"><path d="M1.2 9.75 H22.6 M14.6 1.7 L22.6 9.75 L14.6 17.8" stroke="#151c2b" stroke-width="3.0" stroke-linecap="round" stroke-linejoin="round"/></svg> loadgenerator, causing all parent spans to appear slow</div>
<div class="t" style="left:3408.5px;top:2049.90px;font-family:'Liberation Sans', sans-serif;font-size:26px;font-weight:400;color:#5f6773;letter-spacing:-0.614px;-webkit-text-stroke:0.35px currentColor;">Updated a few seconds ago</div>
<div class="t" style="left:212.5px;top:2105.75px;font-family:'Liberation Sans', sans-serif;font-size:25px;font-weight:700;color:#000000;letter-spacing:-0.509px;">AI Generated</div>
<div class="t" style="left:407px;top:2105.75px;font-family:'Liberation Sans', sans-serif;font-size:25px;font-weight:700;color:#000000;letter-spacing:-0.232px;">90% Importance</div>
<div class="t" style="left:3426px;top:2105.75px;font-family:'Liberation Sans', sans-serif;font-size:25px;font-weight:700;color:#000000;letter-spacing:-0.392px;">Supports 2 Hypotheses</div>
<div class="t" style="left:195px;top:2160.78px;font-family:'Liberation Sans', sans-serif;font-size:28.5px;font-weight:400;color:#2b3645;letter-spacing:0.163px;-webkit-text-stroke:0.35px currentColor;">Full trace d536eeaf9c0ce4734f361a0c3211efc2 shows: frontend HTTP POST (97.8s total) <svg style="display:inline-block;width:0.74em;height:0.6em;vertical-align:0.09em;margin:0 0.02em" viewBox="0 0 24 19.5" fill="none"><path d="M1.2 9.75 H22.6 M14.6 1.7 L22.6 9.75 L14.6 17.8" stroke="#2b3645" stroke-width="2.5" stroke-linecap="round" stroke-linejoin="round"/></svg> checkoutservice PlaceOrder (97.8s) <svg style="display:inline-block;width:0.74em;height:0.6em;vertical-align:0.09em;margin:0 0.02em" viewBox="0 0 24 19.5" fill="none"><path d="M1.2 9.75 H22.6 M14.6 1.7 L22.6 9.75 L14.6 17.8" stroke="#2b3645" stroke-width="2.5" stroke-linecap="round" stroke-linejoin="round"/></svg> paymentservice Charge (10.0s). All downstream operations after payment (ShipOrder 1.5ms, EmptyCart 2.7ms, email 7.2ms) complete in single</div>
<div class="t" style="left:195px;top:2203.28px;font-family:'Liberation Sans', sans-serif;font-size:28.5px;font-weight:400;color:#2b3645;letter-spacing:0.533px;-webkit-text-stroke:0.35px currentColor;">-digit milliseconds, confirming payment is the sole bottleneck.</div>
<div class="t" style="left:178.5px;top:2297.85px;font-family:'Liberation Sans', sans-serif;font-size:29px;font-weight:400;color:#0b64c1;letter-spacing:-0.391px;-webkit-text-stroke:0.35px currentColor;">Show all</div>
<div class="t" style="left:182.5px;top:2389.20px;font-family:'Liberation Sans', sans-serif;font-size:38px;font-weight:700;color:#151c2b;letter-spacing:-0.582px;">Alternative hypotheses (2)</div>
</div></body></html>
